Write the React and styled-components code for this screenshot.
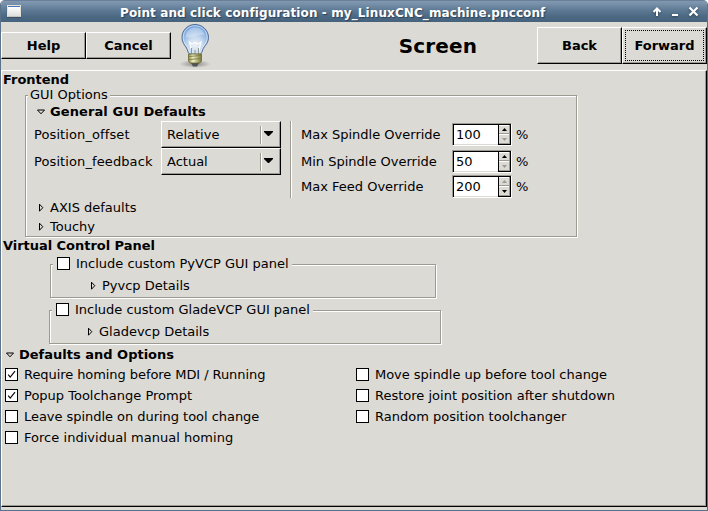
import React from "react";
import styled, { createGlobalStyle, css } from "styled-components";

const Global = createGlobalStyle`
  * { box-sizing: border-box; }
  body { margin: 0; background: #fff; }
`;

const BG = "#dcdad5";
const SHADE = "#9c9a91";

const raised = css`
  background: ${BG};
  border: 1px solid;
  border-color: #fff #000 #000 #fff;
  box-shadow: inset -1px -1px 0 ${SHADE};
`;

const Window = styled.div`
  width: 708px;
  height: 511px;
  display: flex;
  flex-direction: column;
  background: ${BG};
  border: 1px solid #5b728b;
  border-top: 0;
  border-radius: 5px 5px 0 0;
  overflow: hidden;
  font: 13px/16px "DejaVu Sans", sans-serif;
  color: #000;
  white-space: nowrap;
`;

const TitleBar = styled.header`
  flex: none;
  height: 22px;
  display: flex;
  align-items: center;
  padding: 0 9px 0 7px;
  margin: 0 -1px;
  background: linear-gradient(#53687f 0, #8198b1 1px, #7890a9 4px, #5e7a95 10px, #4d6a85 16px, #46627d 22px);
  color: #fff;
`;

const WindowIcon = styled.span`
  width: 14px;
  height: 12px;
  border: 1px solid #e4e4dc;
  border-bottom-color: #c4c4bc;
  background: linear-gradient(#4a74bd 1px, #fff 1px, #dededa);
  box-shadow: 0 1px 1px #3c5268;
`;

const WindowTitle = styled.h1`
  flex: none;
  margin: 3px 0 0 99px;
  width: 532px;
  font-size: 12px;
  line-height: 18px;
  letter-spacing: 0.1px;
  text-shadow: 1px 1px 1px #2c4158;
`;

const WindowButtons = styled.svg`
  flex: none;
  width: 47px;
  height: 12px;
  margin-top: 2px;
  filter: drop-shadow(0 1px 1px #2c4158);
`;

const Toolbar = styled.div`
  flex: none;
  height: 48px;
  display: flex;
`;

const Button = styled.button`
  ${raised}
  width: 85px;
  height: ${(p) => (p.$tall ? 37 : 27)}px;
  margin-top: ${(p) => (p.$tall ? 5 : 10)}px;
  padding: 3px;
  font: bold 13px/16px "DejaVu Sans", sans-serif;
  display: flex;
`;

const ButtonLabel = styled.span`
  flex: 1;
  align-self: stretch;
  display: flex;
  align-items: center;
  justify-content: center;
  ${(p) => p.$focus && "border: 1px dotted #000; margin: -1px;"}
`;

const Bulb = styled.svg`
  width: 34px;
  height: 46px;
  margin-left: 7px;
`;

const PageTitle = styled.h2`
  flex: 1;
  margin: 0;
  padding-left: 127px;
  text-align: center;
  font-size: 20px;
  line-height: 48px;
  letter-spacing: 0.15px;
`;

const Page = styled.main`
  ${raised}
  height: 437px;
  display: flex;
  flex-direction: column;
  align-items: flex-start;
`;

const Heading = styled.h3`
  margin: 0 0 0 1px;
  font-size: 13px;
  line-height: 17px;
  letter-spacing: -0.04px;
`;

const Frame = styled.section`
  width: ${(p) => p.$w}px;
  height: ${(p) => p.$h}px;
  margin: ${(p) => p.$m};
  border: 1px solid ${SHADE};
  box-shadow: 1px 1px 0 #fff, inset 1px 1px 0 #fff;
`;

const Legend = styled.div`
  width: max-content;
  height: 16px;
  margin: ${(p) => p.$m};
  padding: 0 ${(p) => p.$pr || 2}px 0 ${(p) => p.$pl || 2}px;
  background: ${BG};
`;

const ExpanderRow = styled.div`
  height: ${(p) => p.$h || 19}px;
  margin-left: ${(p) => p.$x}px;
  display: flex;
  align-items: center;
  gap: 4px;
  font-weight: ${(p) => (p.$open ? "bold" : "normal")};
`;

const Tracked = styled.span`
  letter-spacing: ${(p) => p.$track || 0}px;
  ${(p) => p.$low && "margin: 1px 0 -1px;"}
`;

const Triangle = styled.svg`
  width: 10px;
  height: 10px;
  flex: none;
`;

const Options = styled.div`
  display: flex;
  height: 77px;
  margin-left: 8px;
`;

const ComboGrid = styled.div`
  display: grid;
  grid-template-columns: 127px 120px;
  grid-auto-rows: 27px;
`;

const ComboLabel = styled.span`
  padding-top: 1px;
  line-height: 26px;
  letter-spacing: 0.1px;
`;

const ComboBox = styled.div`
  ${raised}
  display: flex;
  align-items: center;
  padding: 0 6px 0 5px;
`;

const ComboText = styled.span`
  flex: 1;
  line-height: 24px;
`;

const ComboArrow = styled.svg`
  width: 14px;
  height: 18px;
`;

const Divider = styled.div`
  width: 2px;
  height: 77px;
  margin: 0 9px;
  background: linear-gradient(90deg, ${SHADE} 50%, #fff 50%);
`;

const SpinGrid = styled.div`
  display: grid;
  grid-template-columns: 151px 60px auto;
  grid-template-rows: 27px 25px 25px;
  padding-top: 2px;
  line-height: 23px;
`;

const SpinBox = styled.div`
  display: flex;
  width: 60px;
  height: 23px;
  border: 1px solid;
  border-color: ${SHADE} #fff #fff ${SHADE};
  background: #fff;
  box-shadow: inset 1px 1px 0 #000, inset 0 -1px 0 ${BG};
`;

const SpinValue = styled.span`
  flex: 1;
  padding-left: 3px;
  line-height: 21px;
`;

const Arrows = styled.svg`
  width: 13px;
  height: 21px;
`;

const Percent = styled.span`
  padding-left: 4px;
`;

const CheckColumns = styled.div`
  display: grid;
  grid-template-columns: 351px 300px;
  grid-auto-rows: 21px;
  margin: -1px 0 0 3px;
`;

const CheckLabel = styled.label`
  display: flex;
  align-items: center;
  gap: 6px;
`;

const CheckBox = styled.svg`
  width: 13px;
  height: 13px;
  flex: none;
`;

function Check({ on, low, track, children }) {
  return (
    <CheckLabel>
      <CheckBox viewBox="0 0 13 13">
        <rect x=".5" y=".5" width="12" height="12" fill="#fff" stroke="#000" />
        {on && <path d="M3.2 6.700L5.200 9.200L10 3.200" fill="none" stroke="#000" strokeWidth="1.1" />}
      </CheckBox>
      <Tracked $track={track} $low={low}>{children}</Tracked>
    </CheckLabel>
  );
}

function Expander({ open, x, h, track, children }) {
  return (
    <ExpanderRow $open={open} $x={x} $h={h}>
      <Triangle viewBox="0 0 10 10">
        <path
          d={open ? "M1.5 3H8.5L5 6.8Z" : "M3.5 1.2V8.2L6.8 4.7Z"}
          fill={BG}
          stroke="#000"
          strokeWidth="1"
        />
      </Triangle>
      <Tracked $track={track}>{children}</Tracked>
    </ExpanderRow>
  );
}

function Combo({ label, value }) {
  return (
    <>
      <ComboLabel>{label}</ComboLabel>
      <ComboBox>
        <ComboText>{value}</ComboText>
        <ComboArrow viewBox="0 0 14 18">
          <path d="M.5 0V18" stroke={SHADE} />
          <path d="M1.5 0V18" stroke="#fff" />
          <path d="M4 5H13V6L9 10H8L4 6Z" />
        </ComboArrow>
      </ComboBox>
    </>
  );
}

function Spin({ label, value, max }) {
  return (
    <>
      <span>{label}</span>
      <SpinBox>
        <SpinValue>{value}</SpinValue>
        <Arrows viewBox="0 0 13 21">
          <path d="M0 0H13V21H0Z" />
          <path d="M1 1H12V10H1ZM1 11H12V20H1Z" fill={BG} />
          <path d="M1 9.5H12M1 19.5H12M11.5 1V20" stroke={SHADE} />
          <path d="M1 10.5H11M1 1.5H11" stroke="#fff" />
          <path d="M4 7H9L6.5 4Z" fill={max ? SHADE : "#000"} />
          <path d="M4 14H9L6.5 17Z" fill={max ? "#000" : SHADE} />
        </Arrows>
      </SpinBox>
      <Percent>%</Percent>
    </>
  );
}

function LightBulb() {
  return (
    <Bulb viewBox="0 0 34 46">
      <defs>
        <radialGradient id="glass" cx=".5" cy=".7" r=".7">
          <stop offset="0" stopColor="#eef2f6" />
          <stop offset=".4" stopColor="#c6d9ee" />
          <stop offset="1" stopColor="#6498d8" />
        </radialGradient>
        <linearGradient id="brass">
          <stop offset="0" stopColor="#8e8e4c" />
          <stop offset=".35" stopColor="#f2f1c6" />
          <stop offset="1" stopColor="#77763a" />
        </linearGradient>
        <radialGradient id="shadow">
          <stop offset="0" stopColor="#555" stopOpacity=".6" />
          <stop offset="1" stopColor="#555" stopOpacity="0" />
        </radialGradient>
      </defs>
      <ellipse cx="17" cy="42" rx="16" ry="4" fill="url(#shadow)" />
      <path d="M13 41H21L19 44.5H15Z" fill="#505354" />
      <path d="M17 2.5C9.5 2.5 4 8.5 4 15.5C4 20.5 6.5 23 8.5 26C10 28.5 10 32 12 32H22C24 32 24 28.500 25.500 26C27.500 23 30.500 20.500 30.500 15.500C30.500 8.500 24.500 2.500 17 2.500Z" fill="url(#glass)" stroke="#506a92" />
      <path d="M17 3.7C10 3.7 5.2 9 5.2 15.500C5.200 20 7.500 22.500 9.500 25.500C11 28 11 31 12.500 31H21.500C23 31 23 28 24.500 25.500C26.500 22.500 29.200 20 29.200 15.500C29.200 9 24 3.700 17 3.700Z" fill="none" stroke="#e4effb" strokeWidth=".9" opacity=".8" />
      <path d="M7.500 15C8 8 13 5.500 17.500 5.500C22 5.500 26 9 26.500 13C20 12 14 17 7.500 15Z" fill="#fff" opacity=".3" />
      <path d="M14 30L11.500 20L14 22L17 20.500L20 22L23 20L20.500 30" fill="none" stroke="#fff" strokeWidth="1.200" opacity=".9" />
      <path d="M13.500 26V32M20.500 26V32M17 28V32" stroke="#929a8d" />
      <path d="M10.500 32H23.500V39L22 41H12L10.500 39Z" fill="url(#brass)" stroke="#67682f" strokeWidth=".8" />
      <path d="M11 34.500L23 33.500M11 37.500L23 36.500" stroke="#7d7c40" strokeWidth=".9" />
    </Bulb>
  );
}

export default function App() {
  return (
    <>
      <Global />
      <Window>
        <TitleBar>
          <WindowIcon />
          <WindowTitle>Point and click configuration - my_LinuxCNC_machine.pncconf</WindowTitle>
          <WindowButtons viewBox="0 0 47 12" fill="none" stroke="#fff" strokeWidth="2">
            <path d="M5 10V3M1.500 6L5 2.500L8.500 6" />
            <path d="M20 9H26" />
            <path d="M37.500 1.500L45.500 9.500M45.500 1.500L37.500 9.500" strokeWidth="2.200" />
          </WindowButtons>
        </TitleBar>
        <Toolbar>
          <Button><ButtonLabel>Help</ButtonLabel></Button>
          <Button><ButtonLabel>Cancel</ButtonLabel></Button>
          <LightBulb />
          <PageTitle>Screen</PageTitle>
          <Button $tall><ButtonLabel>Back</ButtonLabel></Button>
          <Button $tall><ButtonLabel $focus>Forward</ButtonLabel></Button>
        </Toolbar>
        <Page>
          <Heading>Frontend</Heading>
          <Frame $w={552} $h={142} $m="7px 0 0 23px">
            <Legend $m="-9px 0 0 2px">GUI Options</Legend>
            <Expander open x={10} h={18} track={0.09}>General GUI Defaults</Expander>
            <Options>
              <ComboGrid>
                <Combo label="Position_offset" value="Relative" />
                <Combo label="Position_feedback" value="Actual" />
              </ComboGrid>
              <Divider />
              <SpinGrid>
                <Spin label="Max Spindle Override" value="100" />
                <Spin label="Min Spindle Override" value="50" />
                <Spin label="Max Feed Override" value="200" max />
              </SpinGrid>
            </Options>
            <Expander x={10}>AXIS defaults</Expander>
            <Expander x={10}>Touchy</Expander>
          </Frame>
          <Heading>Virtual Control Panel</Heading>
          <Frame $w={386} $h={34} $m="10px 0 0 48px">
            <Legend $m="-10px 0 0 2px" $pl={4} $pr={3}><Check low>Include custom PyVCP GUI panel</Check></Legend>
            <Expander x={37} h={29}>Pyvcp Details</Expander>
          </Frame>
          <Frame $w={392} $h={34} $m="12px 0 0 47px">
            <Legend $m="-10px 0 0 2px" $pl={4} $pr={3}><Check low>Include custom GladeVCP GUI panel</Check></Legend>
            <Expander x={35} h={29}>Gladevcp Details</Expander>
          </Frame>
          <Expander open x={3} h={21}>Defaults and Options</Expander>
          <CheckColumns>
            <Check on track={-0.07}>Require homing before MDI / Running</Check>
            <Check track={-0.03}>Move spindle up before tool change</Check>
            <Check on>Popup Toolchange Prompt</Check>
            <Check>Restore joint position after shutdown</Check>
            <Check track={-0.04}>Leave spindle on during tool change</Check>
            <Check>Random position toolchanger</Check>
            <Check track={0.03}>Force individual manual homing</Check>
          </CheckColumns>
        </Page>
      </Window>
    </>
  );
}
